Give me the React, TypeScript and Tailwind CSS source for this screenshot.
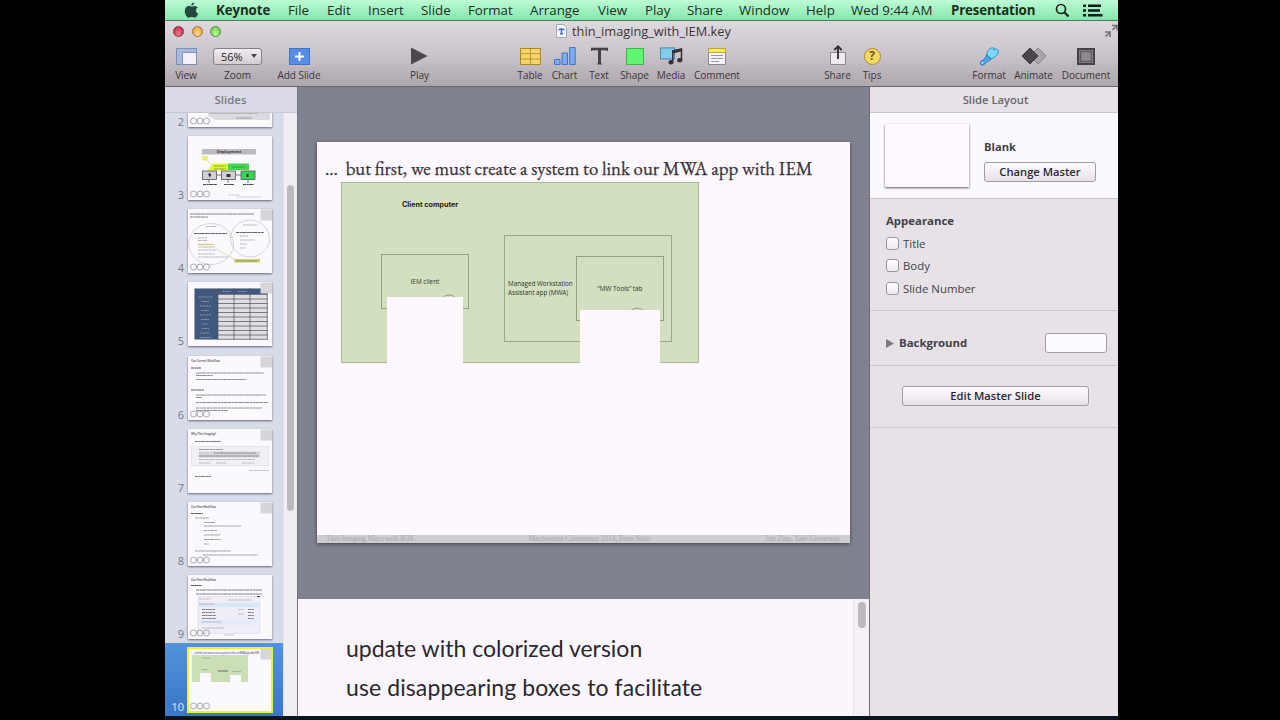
import React from "react";

const menus = [
  { t: "Keynote", c: "w-[54px] font-bold tracking-[-0.1px]" },
  { t: "File", c: "w-[21px]" },
  { t: "Edit", c: "w-[23px]" },
  { t: "Insert", c: "w-[35px]" },
  { t: "Slide", c: "w-[29px]" },
  { t: "Format", c: "w-[44px]" },
  { t: "Arrange", c: "w-[50px]" },
  { t: "View", c: "w-[29px]" },
  { t: "Play", c: "w-[24px]" },
  { t: "Share", c: "w-[34px]" },
  { t: "Window", c: "w-[49px]" },
  { t: "Help", c: "w-[27px]" },
  { t: "Wed 9:44 AM", c: "w-[82px]" },
  { t: "Presentation", c: "w-[87px] font-bold tracking-[-0.15px]" },
];

function MenuBar() {
  return (
    <div className="flex h-[21px] shrink-0 items-center border-b border-[#4f7a62] bg-gradient-to-b from-[#bdfbd6] to-[#84e6ad] pl-[19px] text-[13.3px] text-[#17301f]">
      <svg width="15" height="17" viewBox="0 0 15 17" className="mr-[17px] shrink-0">
        <path
          d="M10.2 0.6c.1 1.5-1.300 3.200-2.900 3.200C7.100 2.300 8.600.8 10.200.6zM7.600 4.700c.7 0 1.600-.8 3-.8 1.200 0 2.400.6 3.100 1.600-2.700 1.600-2.200 5 .5 6.100-.6 1.600-2 4.200-3.500 4.200-1.200 0-1.500-.7-2.900-.7s-1.800.7-2.900.7C3.200 15.800.8 12.200.8 8.900.8 5.800 2.800 4 4.800 4c1.300 0 2.100.7 2.800.7z"
          fill="#23493a"
        />
      </svg>
      <div className="flex gap-[18px]">
        {menus.map((m) => (
          <span key={m.t} className={"shrink-0 whitespace-nowrap leading-5 " + m.c}>
            {m.t}
          </span>
        ))}
      </div>
      <svg width="15" height="15" viewBox="0 0 15 15" className="ml-[17px] shrink-0" fill="none" stroke="#16261c">
        <circle cx="6" cy="6" r="4.5" strokeWidth="1.7" />
        <path d="M9.3 9.300L13.500 13.500" strokeWidth="2.2" />
      </svg>
      <svg width="20" height="13" viewBox="0 0 20 13" className="ml-[13px] shrink-0" fill="#101c15">
        <path d="M0 0.500h3v2.500h-3zM0 5.200h3v2.500h-3zM0 10h3v2.500h-3zM5 0.500h13v2.500H5zM5 5.200h12v2.500H5zM5 10h14.500v2.500H5z" />
      </svg>
    </div>
  );
}

function Light({ c }: { c: string }) {
  return <span className={"h-[11px] w-[11px] rounded-full border " + c} />;
}

function Tool({ w, label, children }: { w: string; label: string; children: React.ReactNode }) {
  return (
    <div className={"flex shrink-0 flex-col items-center " + w}>
      <div className="flex h-[22px] items-center">{children}</div>
      <span className="mt-px whitespace-nowrap text-[10px] leading-[14px] tracking-[-0.05px] text-[#3a363c]">{label}</span>
    </div>
  );
}

function Toolbar() {
  return (
    <div className="flex h-[66px] shrink-0 flex-col border-b border-[#6a666c] bg-gradient-to-b from-[#ded9df] via-[#cbc4cb] to-[#aea6ad]">
      <div className="flex h-[20px] items-center pl-[8px]">
        <div className="flex gap-[7.5px]">
          <Light c="border-[#8d3347] bg-radial-[at_50%_80%] from-[#f57a8c] to-[#b31c38]" />
          <Light c="border-[#a5733a] bg-radial-[at_50%_80%] from-[#ffe08a] to-[#dd9433]" />
          <Light c="border-[#569043] bg-radial-[at_50%_80%] from-[#c0ff9c] to-[#58bd45]" />
        </div>
        <svg width="11" height="14" viewBox="0 0 11 14" className="ml-[335px] shrink-0">
          <path d="M.5.5h7l3 3v10H.5z" fill="#f4f4fb" stroke="#a8a6b4" />
          <path d="M2.500 6q3-2 6 0M5.500 5.500v4M4 9.700h3" fill="none" stroke="#3b6fc4" strokeWidth="1.5" />
        </svg>
        <span className="ml-[5px] whitespace-nowrap text-[12.8px] leading-5 text-[#38353b]">thin_imaging_with_IEM.key</span>
        <svg width="14" height="14" viewBox="0 0 14 14" className="ml-auto shrink-0" fill="none" stroke="#777279" strokeWidth="1.6">
          <path d="M8 1.500h5v5M13 1.500L8.500 6M6 13v-5H1M6 8L1.500 12.500" />
        </svg>
      </div>
      <div className="flex pt-[4px]">
        <Tool w="w-[42px]" label="View">
          <svg width="21" height="17" viewBox="0 0 21 17">
            <rect x=".5" y=".5" width="20" height="16" fill="#f3f2fb" stroke="#7f8db0" />
            <path d="M1 1h19v3H1zM1 1h5v15H1z" fill="#a9b8dd" />
            <path d="M6.500 4v12M6 4.500h14" stroke="#7f92c0" />
          </svg>
        </Tool>
        <Tool w="w-[61px]" label="Zoom">
          <div className="flex h-[17px] w-[49px] items-center justify-between rounded-[3px] border border-[#878188] bg-gradient-to-b from-[#f1edf2] to-[#d3ccd3] pl-[7px] pr-[4px] text-[11px] leading-none text-[#222]">
            56%
            <svg width="6" height="4" viewBox="0 0 6 4">
              <path d="M0 0h6L3 4z" fill="#4a474c" />
            </svg>
          </div>
        </Tool>
        <Tool w="w-[62px]" label="Add Slide">
          <svg width="21" height="17" viewBox="0 0 21 17">
            <rect x=".5" y=".5" width="20" height="16" fill="#568de6" stroke="#4672bd" />
            <path d="M10.500 4v9M6 8.500h9" stroke="#fff" strokeWidth="2" />
          </svg>
        </Tool>
        <Tool w="ml-[65px] w-[49px]" label="Play">
          <svg width="17" height="18" viewBox="0 0 17 18">
            <path d="M0 .5L16.500 9 0 17.500z" fill="#4b484d" />
          </svg>
        </Tool>
        <Tool w="ml-[68px] w-[36px]" label="Table">
          <svg width="21" height="17" viewBox="0 0 21 17">
            <rect x=".5" y=".5" width="20" height="16" fill="#f7d667" stroke="#a9882f" />
            <path d="M10.500 1v15M1 5.700h19M1 11h19" stroke="#b7953a" />
          </svg>
        </Tool>
        <Tool w="w-[33px]" label="Chart">
          <svg width="22" height="18" viewBox="0 0 22 18" fill="#7badf0" stroke="#4374bf">
            <path d="M.5 12.500h5.500v5H.5zM8 6h5.500v11.500H8zM15.700.5h5.500v17h-5.500z" />
          </svg>
        </Tool>
        <Tool w="w-[36px]" label="Text">
          <svg width="17" height="18" viewBox="0 0 17 18" fill="none" stroke="#454247">
            <path d="M0 2h17" strokeWidth="2.6" />
            <path d="M8.500 2v15" strokeWidth="3" />
            <path d="M6 17h5M.6 1v3M16.400 1v3" strokeWidth="1.2" />
          </svg>
        </Tool>
        <Tool w="w-[35px]" label="Shape">
          <svg width="18" height="17" viewBox="0 0 18 17">
            <rect x=".5" y=".5" width="17" height="16" fill="#5df771" stroke="#47b156" />
          </svg>
        </Tool>
        <Tool w="w-[38px]" label="Media">
          <svg width="23" height="18" viewBox="0 0 23 18">
            <rect x=".5" y=".9" width="14" height="11" fill="#84cdea" stroke="#4c88a8" />
            <path d="M12.800 14.500V4l8.700-2v11" fill="none" stroke="#38343a" strokeWidth="1.6" />
            <path d="M12.800 3.500l8.700-2v3l-8.700 2z" fill="#38343a" />
            <ellipse cx="11" cy="15.3" rx="2.6" ry="2.2" fill="#38343a" />
            <ellipse cx="19.7" cy="13.3" rx="2.6" ry="2.2" fill="#38343a" />
          </svg>
        </Tool>
        <Tool w="w-[52px] pl-[2px]" label="Comment">
          <svg width="18" height="17" viewBox="0 0 18 17">
            <rect x=".5" y=".5" width="17" height="16" fill="#f6f3fa" stroke="#8b8690" />
            <path d="M.5.5h17v4H.5z" fill="#f6ec55" stroke="#bba83c" />
            <path d="M3 7.500h12M3 10.500h12M3 13.500h8" stroke="#9a95a2" />
          </svg>
        </Tool>
        <Tool w="ml-[78px] w-[34px] pl-px" label="Share">
          <svg width="16" height="20" viewBox="0 0 16 20" className="-mt-[2px]">
            <path d="M.5 7.500h15v12H.5z" fill="#eeeaf0" stroke="#8d8890" />
            <path d="M8 14V1.500M4.300 5L8 1.300 11.700 5" fill="none" stroke="#333035" strokeWidth="1.9" />
          </svg>
        </Tool>
        <Tool w="w-[36px]" label="Tips">
          <span className="flex h-[17px] w-[17px] items-center justify-center rounded-full border border-[#a98a35] bg-[#f5d95f] text-[12px] font-bold leading-none text-[#70561a]">
            ?
          </span>
        </Tool>
        <Tool w="ml-[75px] w-[48px]" label="Format">
          <svg width="20" height="19" viewBox="0 0 20 19">
            <path d="M9 3.500c1.500-2.300 4-3 6-2.500l-.5 2L17 1.800c1.500.7 2.300 1.700 2.500 3-.8 3-3.500 5.700-7 7L7.500 8z" fill="#7ed8fb" stroke="#3793d0" />
            <path d="M7.800 8L12.300 12 8.500 14.500 4.500 18C2 18.600.6 17 1.400 15L5.500 12z" fill="#4fa8e6" stroke="#2b79bd" />
            <circle cx="3.5" cy="15.8" r=".9" fill="#d6f1ff" />
          </svg>
        </Tool>
        <Tool w="w-[41px]" label="Animate">
          <svg width="26" height="18" viewBox="0 0 26 18">
            <path d="M17 1l8 8-8 8-8-8z" fill="#aaa5ab" stroke="#89848b" />
            <path d="M9 1l8 8-8 8-8-8z" fill="#4b484d" stroke="#3e3b40" />
          </svg>
        </Tool>
        <Tool w="w-[64px]" label="Document">
          <svg width="18" height="17" viewBox="0 0 18 17">
            <rect x="1" y="1" width="16" height="15" fill="#8e8990" stroke="#444147" strokeWidth="2" />
            <rect x="3.5" y="3.5" width="11" height="10" fill="none" stroke="#5f5b62" strokeWidth="1.5" />
          </svg>
        </Tool>
      </div>
    </div>
  );
}

function Greek({ lines, o = 0.5 }: { lines: number[][]; o?: number }) {
  return (
    <g stroke="#4a464e" strokeWidth="1" strokeDasharray="3.1 .4 2.300 .3 4.200 .4" opacity={o}>
      {lines.map(([x, y, w], i) => (
        <path key={i} d={`M${x} ${y}h${w}`} />
      ))}
    </g>
  );
}

const Corner = () => <rect x="72.5" y=".5" width="11.5" height="11" fill="#d7d4da" />;
const Circles = () => (
  <g fill="none" stroke="#96929b" strokeWidth=".8">
    <circle cx="5.5" cy="58" r="3" />
    <circle cx="12" cy="58" r="3" />
    <circle cx="18.5" cy="58" r="3" />
  </g>
);

function Title({ children, w }: { children: string; w: number }) {
  return (
    <text x="3" y="6" fontSize="3" fontWeight="600" fill="#5a565e" textLength={w}>
      {children}
    </text>
  );
}

function Art({ n }: { n: number }) {
  switch (n) {
    case 2:
      return (
        <>
          <path d="M20 30h62v27H28l-8-4z" fill="#dcd9df" />
          <Greek lines={[[22, 50, 48], [48, 55, 16]]} />
          <Circles />
        </>
      );
    case 3:
      return (
        <>
          <rect x="14" y="13" width="54" height="5.5" fill="#bdbabf" />
          <text x="41" y="17.3" fontSize="4" fontWeight="bold" textAnchor="middle" fill="#37343a">Deployment</text>
          <rect x="14" y="20" width="6" height="4.5" fill="#e9f06c" />
          <path d="M19 24l5 5" stroke="#c5cc78" strokeWidth=".6" />
          <path d="M25 27.500h15v7H20z" fill="#dcf92f" />
          <rect x="40" y="27.5" width="21" height="6.5" fill="#3fd852" />
          <Greek lines={[[26, 30, 12], [26, 33, 12], [44, 31, 13]]} />
          <g stroke="#55525a" strokeWidth=".8">
            <rect x="14.5" y="35" width="14" height="8.5" fill="#d3d1d6" />
            <rect x="33.5" y="35" width="14" height="8.5" fill="#d3d1d6" />
            <rect x="53" y="35" width="14" height="8.5" fill="#39d455" />
            <path d="M29 39h4M48 39h5M21 44v3M40 44v3M60 44v3" />
          </g>
          <path d="M20 37.500h3v2l-1.500 2zM38.500 38h4v3h-4zM58.500 38h2v3h-2z" fill="#35323a" />
          <Greek lines={[[15, 48.5, 14], [36, 48.5, 10], [55, 48.5, 11]]} o={1} />
          <Greek lines={[[40, 59, 12], [48, 61, 26]]} o={0.25} />
          <Circles />
        </>
      );
    case 4:
      return (
        <>
          <Greek lines={[[2, 5, 64], [2, 8, 18]]} o={0.7} />
          <Corner />
          <g fill="none" stroke="#c4c1c9" strokeWidth=".7">
            <ellipse cx="23" cy="35" rx="22.5" ry="20.5" />
            <ellipse cx="62" cy="29.5" rx="19.5" ry="18.5" />
          </g>
          <Greek lines={[[6, 24.5, 33], [48, 23.5, 28]]} o={0.85} />
          <Greek lines={[[18, 17.5, 11], [55, 16, 14], [10, 29, 9], [10, 31.5, 9], [10, 38, 17], [10, 41, 18], [10, 45, 17], [10, 48, 30], [52, 27, 8], [52, 31, 15], [52, 35, 7], [52, 39, 6]]} o={0.35} />
          <path d="M10 35.500h16" stroke="#c7cd78" strokeWidth="1.2" />
          <path d="M28 40l20 11" stroke="#c8cc90" strokeWidth=".6" />
          <rect x="46" y="50" width="26" height="3.5" fill="#cbd072" />
          <Greek lines={[[48, 52, 21]]} />
          <Circles />
        </>
      );
    case 5:
      return (
        <>
          <rect x="6.5" y="6.5" width="73" height="51" fill="#e0dde4" />
          <path d="M6.500 6.500h73v5.500H30v45.500H6.500z" fill="#40587c" />
          <path d="M30 6.500v51M46 6.500v51M62 6.500v51M79.300 12v45.500M30 12.500h49.500M30 17h49.500M30 21.500h49.500M30 26h49.500M30 30.500h49.500M30 35h49.500M30 39.500h49.500M30 44h49.500M30 48.500h49.500M30 53h49.500M30 57.300h49.500" stroke="#514e59" strokeWidth=".7" />
          <g stroke="#8f9fbb" strokeWidth=".8" strokeDasharray="2.5 .5">
            <path d="M10 15h15M14 19.500h7M12 24h11M13 28.500h8M12 33h11M13 37.500h8M14 42h6M14 46.500h7M12 51h10M12 55.500h11M34 9.500h9M50 9.500h9" />
          </g>
          <Corner />
        </>
      );
    case 6:
      return (
        <>
          <Title w={29}>Our Current Workflow</Title>
          <Corner />
          <Greek lines={[[3, 12, 10], [3, 34, 13]]} o={0.9} />
          <Greek lines={[[8, 17, 68], [8, 19.5, 17], [8, 23.5, 50], [8, 39, 70], [8, 41.5, 6], [8, 46.5, 72], [8, 52, 66], [8, 54.5, 32]]} o={0.6} />
          <Circles />
        </>
      );
    case 7:
      return (
        <>
          <Title w={25}>Why Thin Imaging?</Title>
          <Corner />
          <Greek lines={[[7, 12.5, 26], [7, 47.5, 16]]} o={0.7} />
          <rect x="3.5" y="17.5" width="77" height="19" fill="#f2eff5" stroke="#d8d5dc" strokeWidth=".5" />
          <rect x="11" y="22.5" width="61" height="6" fill="#d6d3da" />
          <Greek lines={[[11, 20.5, 24], [26, 24, 42], [11, 27, 60]]} />
          <Greek lines={[[11, 30.5, 56], [11, 34, 12], [28, 34, 10], [54, 34, 12], [61, 41.5, 20]]} o={0.3} />
        </>
      );
    case 8:
      return (
        <>
          <Title w={25}>Our New Workflow</Title>
          <Corner />
          <Greek lines={[[3, 11.5, 12]]} o={0.9} />
          <Greek lines={[[7, 16, 14], [16, 20.5, 11], [16, 24, 37], [16, 28.5, 13], [16, 33, 16], [16, 37.5, 17], [16, 42, 5], [7, 49, 36], [15, 53, 55]]} />
          <Circles />
        </>
      );
    case 9:
      return (
        <>
          <Title w={25}>Our New Workflow</Title>
          <Greek lines={[[3, 10.5, 11]]} o={0.9} />
          <Greek lines={[[8, 15, 66], [8, 19, 66]]} o={0.7} />
          <rect x="10" y="21.5" width="62" height="37" fill="#efedf8" stroke="#dbd2de" strokeWidth=".5" />
          <path d="M10 28h62v4H10z" fill="#dbe6f6" />
          <path d="M12 45h58v5H12z" fill="#e3eaf8" />
          <Greek lines={[[14, 34.5, 13], [14, 37.5, 13], [14, 40.5, 14], [14, 43.5, 14], [60, 34.5, 6], [60, 37.5, 6], [60, 40.5, 6], [60, 43.5, 6]]} o={0.65} />
          <path d="M69 21.500h3" stroke="#403c46" />
          <Greek lines={[[11, 24, 12], [40, 25, 23], [11, 29, 16], [50, 34.5, 6], [50, 39, 6], [14, 47, 19], [14, 53, 22], [36, 60, 10]]} o={0.3} />
          <Circles />
        </>
      );
    default:
      return (
        <>
          <text x="5" y="6" fontSize="2.6" fill="#4a464e" textLength="66">… but first, we must create a system to link our MWA app with IEM</text>
          <Corner />
          <path d="M4 7h56v27h-7v-7H42v7H23v-9H12v9H4z" fill="#cbdeb6" />
          <Greek lines={[[30, 23, 10]]} o={0.8} />
          <Greek lines={[[14, 10, 8], [14, 21.5, 6], [44, 23.5, 9]]} o={0.3} />
          <Circles />
        </>
      );
  }
}

function Sidebar() {
  return (
    <div className="flex w-[133px] shrink-0 flex-col border-r border-[#77747c]">
      <div className="h-[26px] shrink-0 border-b border-[#c6c7d3] bg-[#dadbe7] pr-px text-center text-[11.3px] font-semibold leading-[25px] tracking-[0.1px] text-[#777784]">
        Slides
      </div>
      <div className="flex min-h-0 flex-1">
        <div className="flex w-[118px] flex-col justify-end overflow-hidden bg-[#d8dce9]">
          {[2, 3, 4, 5, 6, 7, 8, 9, 10].map((n) => (
            <div
              key={n}
              className={
                "flex h-[73.1px] shrink-0 items-start pt-[5px] " +
                (n === 10 ? "bg-gradient-to-b from-[#5393da] to-[#3a77c8]" : "")
              }
            >
              <span
                className={
                  "mt-[51px] w-[19px] shrink-0 text-right text-[11px] leading-[16px] " +
                  (n === 10 ? "text-[#d9ecff]" : "text-[#71778a]")
                }
              >
                {n}
              </span>
              <svg
                width="84"
                height="64"
                viewBox="0 0 84 64"
                className={
                  "ml-[4px] shrink-0 bg-[#fbf8fe] " +
                  (n === 10 ? "outline-2 -outline-offset-1 outline-[#e9f23a]" : "shadow-[0_1px_2px_rgba(60,60,80,0.75)]")
                }
              >
                <Art n={n} />
              </svg>
            </div>
          ))}
        </div>
        <div className="flex flex-1 justify-center border-l border-[#e3e0e8] bg-[#f0edf4]">
          <div className="mt-[72px] h-[326px] w-[7px] rounded-full bg-[#bcb9c0]" />
        </div>
      </div>
    </div>
  );
}

function Slide() {
  return (
    <div className="relative h-[401px] w-[533px] overflow-hidden bg-[#fcf8fe] shadow-[0_1px_4px_rgba(30,30,40,0.7)]">
      <h1 className="whitespace-nowrap pl-[8px] pt-[15px] font-['EB_Garamond','Liberation_Serif',serif] text-[18.8px] leading-[24px] text-[#38333a] [-webkit-text-stroke:0.25px_#38333a]">
        <span className="tracking-[4px]">…</span> but first, we must create a system to link our MWA app with IEM
      </h1>
      <div className="absolute left-[24px] top-[40px] h-[181px] w-[358px] border border-[#a9b69c] bg-[#d2e0c0] text-[#2d342a]">
        <span className="absolute left-[60px] top-[17px] whitespace-nowrap font-['Inter',sans-serif] text-[7.2px] font-bold leading-[10px] text-[#1f241d]">
          Client computer
        </span>
        <div className="absolute left-[39px] top-[71px] h-[55px] w-[88px] border border-[#93a085] pt-[22px] text-center text-[6.4px] leading-[10px]">
          IEM client
        </div>
        <div className="absolute left-[162px] top-[52px] h-[107px] w-[168px] border border-[#9aa78c]">
          <p className="absolute left-[3px] top-[44px] whitespace-nowrap text-[6.3px] leading-[8.5px]">
            Managed Workstation
            <br />
            Assistant app (MWA)
          </p>
          <div className="absolute left-[71px] top-[20px] h-[65px] w-[88px] border border-[#93a085] pt-[27px] text-center text-[6.4px] leading-[10px]">
            “MW Tools” tab
          </div>
        </div>
        <svg width="16" height="5" viewBox="0 0 16 5" className="absolute left-[99px] top-[110px]">
          <path d="M1 5q7-6 14 0" fill="none" stroke="#93a085" />
        </svg>
        <svg width="16" height="5" viewBox="0 0 16 5" className="absolute left-[287px] top-[123px]">
          <path d="M1 5q7-6 14 0" fill="none" stroke="#93a085" />
        </svg>
        <div className="absolute left-[45px] top-[114px] h-[67px] w-[76px] bg-[#fcf8fe]" />
        <div className="absolute left-[238px] top-[127px] h-[54px] w-[80px] bg-[#fcf8fe]" />
      </div>
      <div className="absolute inset-x-0 bottom-0 flex h-[8px] items-center justify-between bg-[#cfccd2] pl-[9px] pr-[10px] font-['Liberation_Serif',serif] text-[7.3px] leading-none text-[#aca8af]">
        <span>Thin Imaging Macs with IEM</span>
        <span>MacSysmin Conference 2014, Penn State</span>
        <span>Jim Zhai, Yale University</span>
      </div>
    </div>
  );
}

function Stage() {
  return (
    <div className="flex w-[571px] shrink-0 flex-col">
      <div className="flex h-[512px] shrink-0 items-start bg-[#80838f] pl-[19px] pt-[55px]">
        <Slide />
      </div>
      <div className="flex flex-1 bg-[#fbf6fd]">
        <div className="flex-1 whitespace-nowrap pl-[48px] pt-[30px] font-['Lato',sans-serif] text-[23px] leading-[38.5px] text-[#2b282d]">
          <p>update with colorized version</p>
          <p className="tracking-[0.1px]">use disappearing boxes to facilitate</p>
        </div>
        <div className="flex w-[16px] justify-center border-l border-[#e6e2e9] bg-[#f4f0f6]">
          <div className="mt-[3px] h-[26px] w-[8px] rounded-full bg-[#bdb9bf]" />
        </div>
      </div>
    </div>
  );
}

const button =
  "flex h-[20px] items-center justify-center rounded-[3px] border border-[#a09ca3] bg-gradient-to-b from-[#fefcff] to-[#e6e1e8] text-[11.2px] font-semibold leading-none text-[#2c292e]";

function Inspector() {
  return (
    <div className="flex flex-1 flex-col border-l border-[#6d6e78] bg-[#e6e2e8] text-[11.4px] text-[#444147]">
      <div className="h-[26px] shrink-0 border-b border-[#c9c5cc] pl-[3px] text-center text-[11.2px] font-semibold leading-[26px] text-[#69656d]">
        Slide Layout
      </div>
      <div className="flex h-[86px] shrink-0 border-b border-[#c9c5cc] bg-[#fcf9fe] pl-[15px] pt-[11px]">
        <div className="h-[63px] w-[84px] bg-[#fdf9ff] shadow-[0_1px_2px_rgba(50,50,60,0.8)]" />
        <div className="ml-[15px] pt-[15px]">
          <div className="text-[11.2px] font-bold leading-4">Blank</div>
          <button className={button + " mt-[7px] w-[112px]"}>Change Master</button>
        </div>
      </div>
      <div className="h-[112px] shrink-0 border-b border-[#cbc7ce] pl-[16px] pt-[14px]">
        <div className="mb-[3px] text-[11.4px] font-bold leading-4">Appearance</div>
        {["Title", "Body", "Slide Number"].map((t) => (
          <label key={t} className="flex h-[22.5px] items-center gap-[4px]">
            <span className="h-[13px] w-[13px] rounded-[3px] border border-[#98949c] bg-gradient-to-b from-[#fffdff] to-[#eeeaf0]" />
            {t}
          </label>
        ))}
      </div>
      <div className="flex h-[55px] shrink-0 items-center border-b border-[#cbc7ce] pl-[16px] pr-[11px] pt-[10px]">
        <svg width="8" height="9" viewBox="0 0 8 9">
          <path d="M0 0l8 4.500L0 9z" fill="#7d7981" />
        </svg>
        <span className="ml-[5px] text-[11.4px] font-bold">Background</span>
        <span className="ml-auto h-[20px] w-[62px] rounded-[3px] border border-[#a09ca3] bg-[#fdfaff]" />
      </div>
      <div className="flex h-[62px] shrink-0 items-center border-b border-[#cbc7ce] pb-px pl-[32px]">
        <button className={button + " w-[187px]"}>Edit Master Slide</button>
      </div>
    </div>
  );
}

export default function App() {
  return (
    <div className="flex h-[720px] w-[1280px] justify-start overflow-hidden bg-black pl-[165px] font-['Open_Sans','Noto_Sans',sans-serif]">
      <div className="flex h-[720px] w-[953px] shrink-0 flex-col overflow-hidden border-b-4 border-[#0a1522]">
        <MenuBar />
        <Toolbar />
        <div className="flex min-h-0 flex-1">
          <Sidebar />
          <Stage />
          <Inspector />
        </div>
      </div>
    </div>
  );
}
